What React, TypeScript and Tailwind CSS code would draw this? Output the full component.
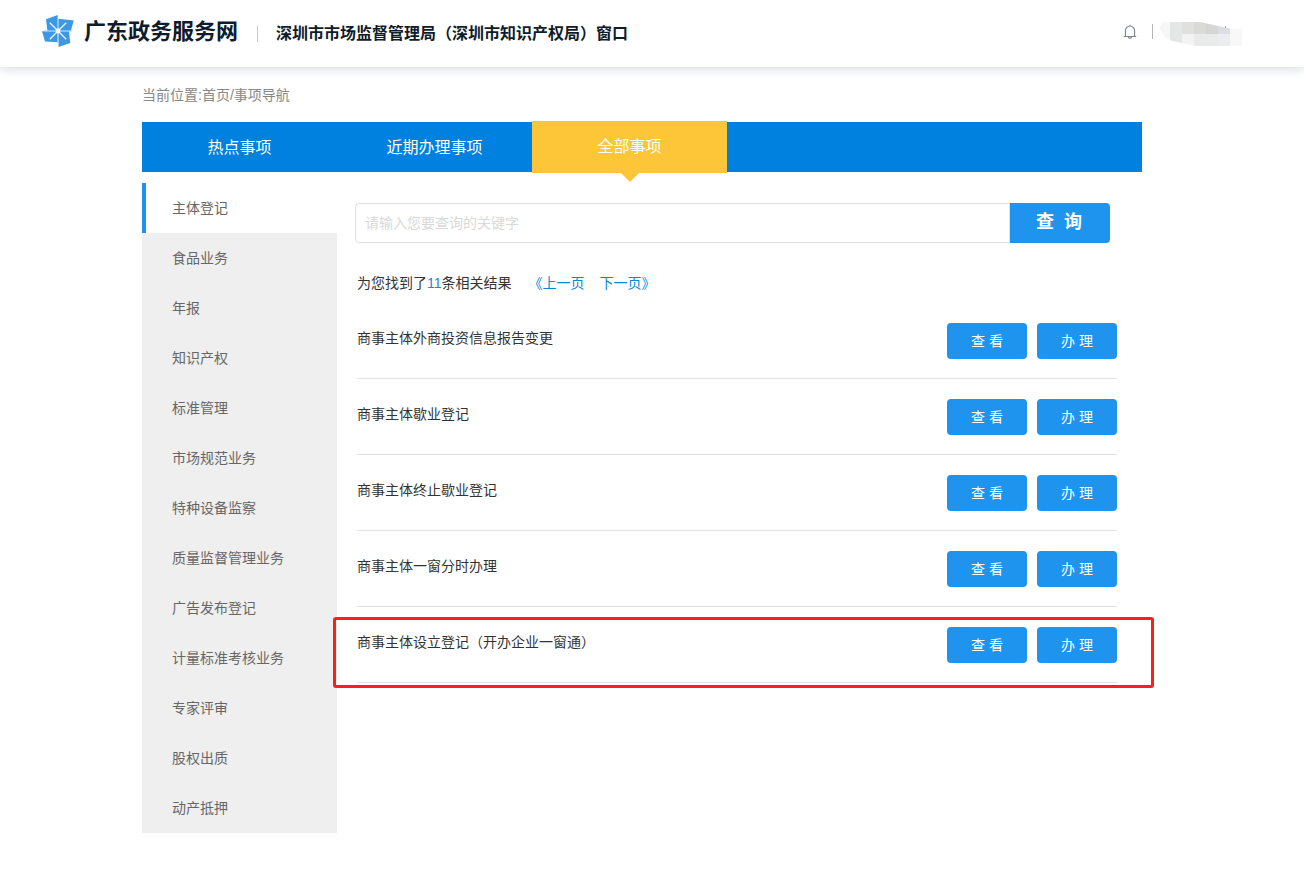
import { useState } from "react";

const TABS = ["热点事项", "近期办理事项", "全部事项"];

const CATEGORIES = [
  "主体登记",
  "食品业务",
  "年报",
  "知识产权",
  "标准管理",
  "市场规范业务",
  "特种设备监察",
  "质量监督管理业务",
  "广告发布登记",
  "计量标准考核业务",
  "专家评审",
  "股权出质",
  "动产抵押",
];

const ITEMS = [
  "商事主体外商投资信息报告变更",
  "商事主体歇业登记",
  "商事主体终止歇业登记",
  "商事主体一窗分时办理",
  "商事主体设立登记（开办企业一窗通）",
];

function Logo() {
  return (
    <svg className="-mt-0.5" width="32" height="32" viewBox="0 0 32 32" fill="none">
      <g fill="#3d98e4">
        <path d="M4 4.2 15.7 0V15.7H5.4Z" />
        <path d="M16.3 3.8 31.8 5.4 28.8 15.7H16.3Z" />
        <path d="M0 16.3H15.7V27.2L3 26.6Z" />
        <path d="M16.3 16.3H27L28.2 28 16.6 32Z" />
      </g>
      <path d="M16 4V28M2 16H30" stroke="#9fcdf3" strokeWidth="1" />
      <path d="M7.8 7.8 24.2 24.2M24.2 7.8 7.8 24.2" stroke="#eef7fe" strokeWidth="1.3" />
      <circle cx="16" cy="16" r="2.4" fill="#fff" />
    </svg>
  );
}

function Bell() {
  return (
    <svg width="14" height="16" viewBox="0 0 14 16" fill="none" stroke="#7d8087" strokeWidth="1.1">
      <path d="M.8 12.5h12.4M2.4 12.3V6.8a4.6 4.8 0 0 1 9.2 0v5.5M7 2.2V.8M5.2 13.2a1.9 1.4 0 0 0 3.6 0" />
    </svg>
  );
}

// user name, masked with blocks
function MaskedName() {
  return (
    <svg width="82" height="25" viewBox="0 0 82 25" shapeRendering="crispEdges">
      <defs>
        <clipPath id="mask-shape">
          <path d="M4 0H40L70 6.5H82V24H36L12 19Q0 14 0 5Q0 1 4 0Z" />
        </clipPath>
      </defs>
      <g clipPath="url(#mask-shape)">
        <path fill="#f7f7f7" d="M0 0h10v24H0z" />
        <path fill="#e5e7e6" d="M10 0h12v24H10z" />
        <path fill="#e0e0de" d="M22 0h12v12H22z" />
        <path fill="#dadad9" d="M34 0h12v12H34z" />
        <path fill="#d6d6d6" d="M46 0h12v12H46z" />
        <path fill="#dcdfe0" d="M58 0h12v12H58z" />
        <path fill="#f3f3f3" d="M22 12h12v12H22z" />
        <path fill="#e9ebea" d="M34 12h24v12H34z" />
        <path fill="#ebedf0" d="M58 12h12v12H58z" />
        <path fill="#f8f8f8" d="M70 0h12v24H70z" />
      </g>
      <path fill="#a5a5a5" d="M65 4h1v2h-1z" />
    </svg>
  );
}

function Header() {
  return (
    <header className="flex h-[67px] items-center bg-white pl-[42px] pr-[62px] pb-1 shadow-[0_2px_10px_#d5dae2]">
      <Logo />
      <h1 className="ml-2.5 text-[22px] leading-8 font-bold text-[#0f1c2b]">广东政务服务网</h1>
      <div className="mt-1 ml-[19px] h-4 w-px bg-[#c9c9c9]" />
      <h2 className="mt-1 ml-[18px] text-base leading-6 font-bold text-[#0f1c2b]">
        深圳市市场监督管理局（深圳市知识产权局）窗口
      </h2>
      <div className="ml-auto flex items-center">
        <Bell />
        <div className="ml-[15px] h-[15px] w-px bg-[#b5b5b5]" />
        <div className="mt-1.5 ml-[7px]">
          <MaskedName />
        </div>
      </div>
    </header>
  );
}

export default function App() {
  const [tab, setTab]           = useState(2);
  const [category, setCategory] = useState(0);
  const [keyword, setKeyword]   = useState("");

  return (
    <div
      className="min-h-[887px] bg-white text-sm text-[#333]
                 font-['Liberation_Sans','Noto_Sans_CJK_SC',sans-serif]"
    >
      <Header />

      <main className="ml-[142px] w-[1000px]">
        <p className="pt-[18px] pb-[17px] leading-5 text-[#888]">当前位置:首页/事项导航</p>

        <nav className="flex h-[50px] items-center bg-[#0081df] text-base text-white">
          {TABS.map((label, i) => (
            <button
              key={label}
              onClick={() => setTab(i)}
              className={
                tab === i
                  ? "relative h-[52px] w-[195px] bg-[#fdc639]"
                  : "h-[50px] w-[195px] pt-0.5"
              }
            >
              {label}
              {tab === i && (
                <span
                  className="absolute top-full left-[89px] h-[9px] w-[18px] bg-[#fdc639]
                             [clip-path:polygon(0_0,100%_0,50%_100%)]"
                />
              )}
            </button>
          ))}
        </nav>

        <div className="mt-[11px] flex">
          <ul className="w-[195px] shrink-0 bg-[#efefef] text-[#666]">
            {CATEGORIES.map((name, i) => (
              <li
                key={name}
                onClick={() => setCategory(i)}
                className={
                  category === i
                    ? "h-[50px] border-l-4 border-[#1e94ef] bg-white pl-[26px] leading-[50px]"
                    : "h-[50px] pl-[30px] leading-[50px]"
                }
              >
                {name}
              </li>
            ))}
          </ul>

          <section className="w-[785px] shrink-0 pt-5">
            <form className="ml-[18px] flex h-10" onSubmit={e => e.preventDefault()}>
              <input
                type="text"
                placeholder="请输入您要查询的关键字"
                value={keyword}
                onChange={e => setKeyword(e.target.value)}
                className="w-[655px] rounded-l border border-[#dfdfdf] px-[9px]
                           placeholder-[#d9d9d9] outline-none"
              />
              <button
                type="submit"
                className="flex w-[100px] items-center justify-center gap-2.5 rounded-r bg-[#1e94ef]
                           pr-0.5 pb-0.5 text-lg font-bold text-white"
              >
                <span>查</span>
                <span>询</span>
              </button>
            </form>

            <div className="mt-[30px] mb-2.5 ml-5 flex h-5 leading-5">
              <p>
                为您找到了<span className="text-[#1e88d2]">11</span>条相关结果
              </p>
              <a href="#" className="ml-[17px] text-[#0a88cc]">《上一页</a>
              <a href="#" className="ml-[15px] text-[#0a88cc]">下一页》</a>
            </div>

            <ul className="relative ml-5 w-[760px]">
              {ITEMS.map(name => (
                <li key={name} className="flex h-[76px] items-start gap-2.5 border-b border-[#e2e2e2] pt-5">
                  <span className="mt-[5px] mr-auto leading-5">{name}</span>
                  <button className="h-9 w-20 rounded bg-[#1e94ef] text-white">查 看</button>
                  <button className="h-9 w-20 rounded bg-[#1e94ef] text-white">办 理</button>
                </li>
              ))}
              {/* highlights the last item */}
              <li className="absolute -right-[37px] -bottom-[5px] -left-6 h-[71px] rounded-[3px] border-3 border-[#f92116]" />
            </ul>
          </section>
        </div>
      </main>
    </div>
  );
}
